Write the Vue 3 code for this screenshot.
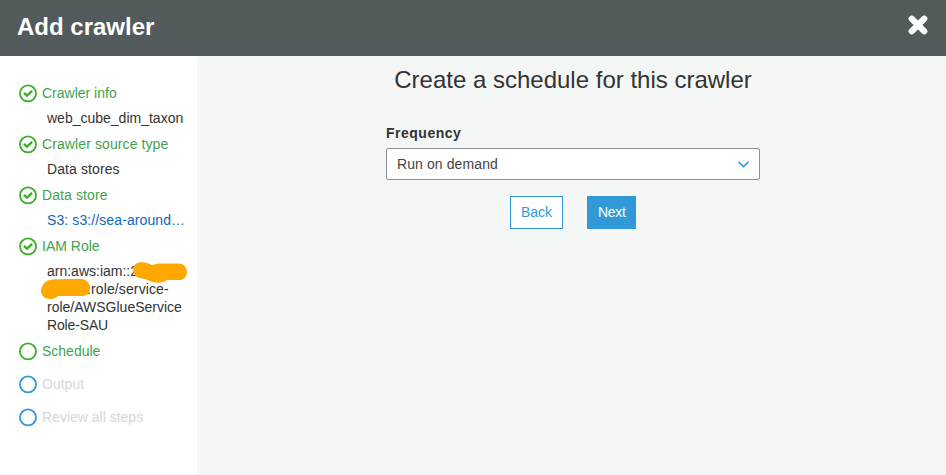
<script setup>
const steps = [
  { label: 'Crawler info', state: 'done', detail: 'web_cube_dim_taxon' },
  { label: 'Crawler source type', state: 'done', detail: 'Data stores', loose: true },
  { label: 'Data store', state: 'done', detail: 'S3: s3://sea-around…', link: true, loose: true },
  { label: 'IAM Role', state: 'done', role: true },
  { label: 'Schedule', state: 'current' },
  { label: 'Output', state: 'todo' },
  { label: 'Review all steps', state: 'todo' },
]
</script>

<template>
  <div class="page">
    <header class="header">
      <h1>Add crawler</h1>
      <button class="close" aria-label="Close">
        <svg width="20" height="20" viewBox="0 0 20 20">
          <path d="M3.8 3.8L16.2 16.2M16.2 3.8L3.8 16.2" stroke="#fff" stroke-width="6.2" stroke-linecap="round" />
          <path d="M3.6 3.6L16.4 16.4M16.4 3.6L3.6 16.4" stroke="#fff" stroke-width="4.4" stroke-linecap="square" />
        </svg>
      </button>
    </header>
    <div class="body">
      <nav class="sidebar">
        <div v-for="s in steps" :key="s.label" class="step" :class="[s.state, { loose: s.loose }]">
          <div class="label">
            <svg class="icon" width="18" height="19" viewBox="0 0 18 19" fill="none" stroke="currentColor">
              <circle cx="9" cy="9.4" r="8" stroke-width="1.8" />
              <path v-if="s.state === 'done'" d="M4.9 8.8L8 11.7L13.1 6.9" stroke-width="2.4" />
            </svg>
            <span>{{ s.label }}</span>
          </div>
          <div v-if="s.detail" class="detail" :class="{ link: s.link }">{{ s.detail }}</div>
          <div v-if="s.role" class="detail role">
            <div>arn:aws:iam::2</div>
            <div class="rest">:role/service-</div>
            <div>role/AWSGlueService</div>
            <div class="tight">Role-SAU</div>
            <svg class="redaction" width="150" height="40" viewBox="0 0 150 40">
              <path d="M98 0.5C103 -0.5 107 1 111 3L118 1.5H138C148.500 2 148.500 18 138 18H126C122 21.500 113 21.500 108 18.500C104 17 102 16.500 99 16C90 15 90 2 98 0.500Z" fill="#ffa800" />
              <path d="M9 18C13 16.500 19 17.500 24 17H40C51.500 18 52 33 42 34H17C13 38.500 4 38 1 33C-2 28 2 19 9 18Z" fill="#ffa800" />
            </svg>
          </div>
        </div>
      </nav>
      <main class="main">
        <h2>Create a schedule for this crawler</h2>
        <div class="form">
          <div class="field-label">Frequency</div>
          <div class="select">
            <span>Run on demand</span>
            <svg width="12" height="8" viewBox="0 0 12 8" fill="none" stroke="#3199d8" stroke-width="1.5">
              <path d="M1.500 1.900L6.500 6.600L11.500 1.900" />
            </svg>
          </div>
          <div class="actions">
            <button class="btn back">Back</button>
            <button class="btn next">Next</button>
          </div>
        </div>
      </main>
    </div>
  </div>
</template>

<style>
body {
  margin: 0;
  overflow: hidden;
}
</style>

<style scoped>
.page {
  display: flex;
  flex-direction: column;
  height: 475px;
  font: 14px/18px "Liberation Sans", Arial, sans-serif;
  color: #333;
}
.header {
  box-sizing: border-box;
  height: 56px;
  display: flex;
  justify-content: space-between;
  padding: 13px 18px 0 17px;
  background: #525a5c;
  color: #fff;
}
h1 {
  margin: 0;
  font-size: 24px;
  line-height: 28px;
}
.close {
  padding: 2px 0 0;
  border: 0;
  background: none;
  height: 22px;
}
.close svg {
  display: block;
}
.body {
  flex: 1;
  display: flex;
}
.sidebar {
  box-sizing: border-box;
  width: 197px;
  padding: 28px 0 0 19px;
  background: #fff;
}
.label {
  display: flex;
  gap: 5px;
  height: 18px;
  margin-bottom: 15px;
}
.icon {
  flex: none;
}
.done .label,
.current .label {
  color: #3fa34d;
}
.done .icon,
.current .icon {
  color: #3eae2b;
}
.todo .label {
  color: #d5d8d8;
}
.todo .icon {
  color: #3199d8;
}
.done .label {
  margin-bottom: 7px;
}
.loose {
  letter-spacing: 0.1px;
}
.detail {
  margin: 0 0 8px 28px;
  white-space: nowrap;
}
.link {
  color: #1166bb;
}
.role {
  position: relative;
}
.rest {
  padding-left: 40px;
  letter-spacing: 0.12px;
}
.tight {
  letter-spacing: -0.15px;
}
.redaction {
  position: absolute;
  left: -6px;
  top: 0;
}
.main {
  flex: 1;
  display: flex;
  flex-direction: column;
  align-items: center;
  background: #f4f7f6;
}
h2 {
  margin: 10px 0 0 3px;
  font-size: 24px;
  line-height: 28px;
  font-weight: 400;
}
.form {
  width: 374px;
  margin: 30px 0 0 3px;
}
.field-label {
  font-weight: 700;
  letter-spacing: 0.5px;
}
.select {
  box-sizing: border-box;
  height: 32px;
  margin-top: 6px;
  padding: 0 10px;
  display: flex;
  align-items: center;
  justify-content: space-between;
  border: 1px solid #889091;
  border-radius: 2px;
  background: #fff;
  color: #444;
  letter-spacing: 0.1px;
}
.actions {
  display: flex;
  justify-content: center;
  gap: 24px;
  margin-top: 16px;
}
.btn {
  box-sizing: border-box;
  height: 33px;
  padding: 0 10px 2px;
  border: 1px solid #3199d8;
  border-radius: 0;
  font: inherit;
}
.back {
  width: 53px;
  background: #fff;
  color: #3199d8;
}
.next {
  width: 49px;
  background: #3199d8;
  color: #fff;
  letter-spacing: -0.3px;
}
</style>
